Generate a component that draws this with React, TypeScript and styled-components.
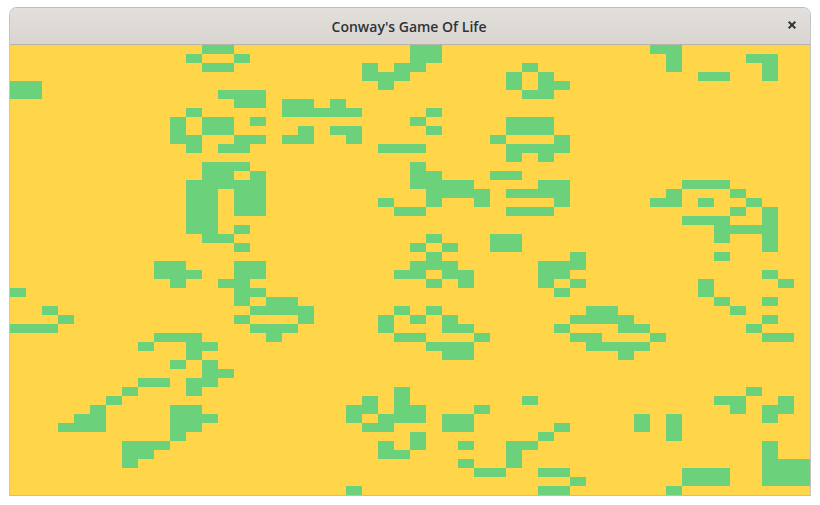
import styled, { createGlobalStyle } from 'styled-components';

export default App;

const COLUMNS = 50;

// live cells per row, as column numbers
const LIVE_CELLS: number[][] = [
   [12, 13, 25, 26, 40, 41],
   [11, 14, 25, 26, 41, 46, 47],
   [12, 13, 22, 24, 25, 32, 41, 47],
   [22, 23, 24, 31, 33, 43, 44, 47],
   [0, 1, 23, 31, 33, 34],
   [0, 1, 13, 14, 15, 32, 33],
   [14, 15, 17, 18, 20],
   [11, 17, 18, 19, 20, 21, 26],
   [10, 12, 13, 15, 25, 31, 32, 33],
   [10, 12, 13, 18, 20, 21, 26, 31, 32, 33],
   [10, 11, 14, 15, 17, 18, 21, 30, 34],
   [11, 13, 14, 23, 24, 25, 31, 32, 33, 34],
   [31, 33],
   [12, 13, 14, 25],
   [12, 13, 15, 25, 26, 30, 31],
   [11, 12, 13, 14, 15, 25, 26, 27, 28, 33, 34, 42, 43, 44],
   [11, 12, 14, 15, 26, 27, 28, 29, 31, 32, 33, 34, 41, 45],
   [11, 12, 14, 15, 23, 26, 29, 34, 40, 41, 43, 46],
   [11, 12, 14, 15, 24, 25, 31, 32, 33, 45, 47],
   [11, 12, 42, 43, 44, 47],
   [11, 12, 14, 44, 45, 46, 47],
   [12, 13, 26, 30, 31, 44, 47],
   [14, 25, 27, 30, 31, 47],
   [26, 35, 44],
   [9, 10, 14, 15, 25, 26, 27, 33, 34, 35],
   [9, 10, 11, 14, 15, 24, 25, 27, 28, 33, 34, 47],
   [10, 13, 14, 26, 28, 33, 35, 43, 48],
   [0, 14, 15, 34, 43],
   [14, 16, 17, 44, 47],
   [2, 15, 16, 17, 18, 24, 26, 36, 37, 45],
   [3, 14, 18, 23, 25, 27, 35, 36, 37, 38, 47],
   [0, 1, 2, 15, 16, 17, 23, 27, 28, 34, 38, 39, 46],
   [9, 10, 11, 16, 24, 25, 29, 35, 36, 40, 47, 48],
   [8, 11, 12, 26, 27, 28, 36, 37, 38, 39],
   [11, 27, 28, 38],
   [10, 12],
   [12, 13],
   [8, 9, 11, 12],
   [7, 11, 24, 46],
   [6, 22, 24, 32, 44, 45, 48],
   [5, 10, 11, 21, 22, 24, 25, 29, 45, 47, 48],
   [4, 5, 10, 11, 12, 21, 23, 24, 25, 27, 28, 39, 41, 47],
   [3, 4, 5, 10, 11, 22, 23, 27, 28, 34, 39, 41],
   [10, 25, 33, 41],
   [7, 8, 9, 23, 25, 28, 31, 32, 47],
   [7, 8, 23, 24, 31, 47],
   [7, 28, 31, 47, 48, 49],
   [29, 30, 33, 34, 42, 43, 44, 47, 48, 49],
   [35, 42, 43, 44, 47, 48, 49],
   [21, 33, 34, 41],
];

function App() {
   return (
      <>
         <GlobalStyle />
         <Window>
            <TitleBar>
               <Title>Conway's Game Of Life</Title>
               <CloseButton type='button' aria-label='Close'>
                  <svg width='8' height='8' viewBox='0 0 8 8'>
                     <path
                        d='M0.7 0.7 L7.3 7.3 M7.3 0.7 L0.7 7.3'
                        stroke='#2e3436'
                        strokeWidth='2'
                     />
                  </svg>
               </CloseButton>
            </TitleBar>
            <Board>
               {LIVE_CELLS.flatMap((liveColumns, row) =>
                  Array.from({ length: COLUMNS }, (_, column) => (
                     <Cell
                        key={`${row}-${column}`}
                        $alive={liveColumns.includes(column)}
                     />
                  )),
               )}
            </Board>
         </Window>
      </>
   );
}

const GlobalStyle = createGlobalStyle`
   body {
      margin: 0;
      background: #ffffff;
      font-family: 'Open Sans', 'Noto Sans', sans-serif;
   }
`;

const Window = styled.div`
   box-sizing: content-box;
   width: 800px;
   margin: 7px 0 0 9px;
   border: 1px solid #bdbdbd;
   border-right-color: #c4c4c4;
   border-left-color: #c2c5cc;
   border-radius: 8px 8px 0 0;
   overflow: hidden;
`;

const TitleBar = styled.header`
   height: 36px;
   padding-right: 2px;
   display: flex;
   align-items: center;
   justify-content: center;
   position: relative;
   background: linear-gradient(#e2dfdc, #d9d6d1);
   border-bottom: 1px solid #b6b3ae;
`;

const Title = styled.h1`
   margin: 0;
   font-size: 14px;
   font-weight: 600;
   color: #2e3436;
`;

const CloseButton = styled.button`
   position: absolute;
   top: 13px;
   right: 14px;
   padding: 0;
   border: 0;
   background: none;
   display: flex;
`;

const Board = styled.main`
   display: grid;
   grid-template-columns: repeat(${COLUMNS}, 16px);
   grid-auto-rows: 9px;
   background: #ffd54a;
`;

const Cell = styled.div<{ $alive: boolean }>`
   background: ${({ $alive }) => ($alive ? '#6cd17b' : 'transparent')};
`;
